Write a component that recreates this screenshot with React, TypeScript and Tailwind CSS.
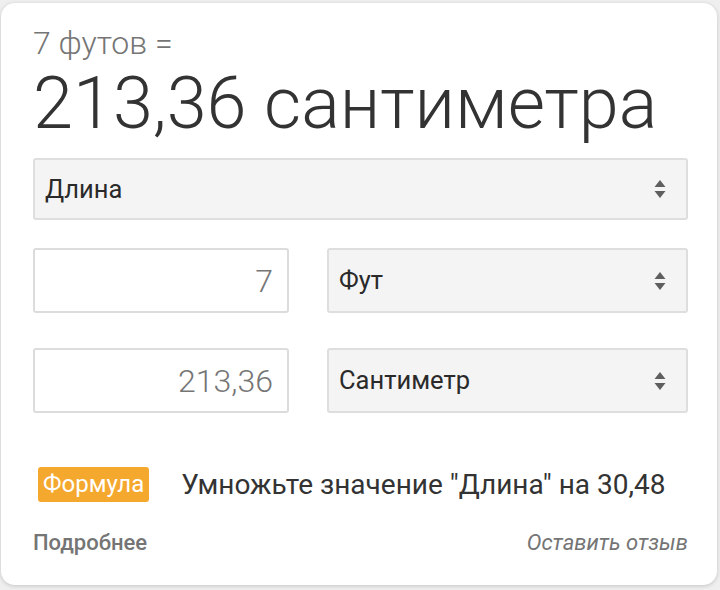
import { useState } from 'react'

function Arrows() {
  return (
    <svg width="14" height="22" viewBox="0 0 14 22" className="shrink-0">
      <path d="M7 2 L12.5 9 H1.5 Z" fill="#5f5f5f" />
      <path d="M7 20 L12.5 13 H1.5 Z" fill="#5f5f5f" />
    </svg>
  )
}

function SelectBox({ label, tall }: { label: string; tall?: boolean }) {
  return (
    <div
      className={`flex items-center justify-between bg-[#f4f4f4] border-2 border-[#dedede] rounded-[3px] pl-[10px] pr-[19px] ${
        tall ? 'h-[62px]' : 'h-[65px]'
      }`}
    >
      <span className="text-[25.5px] font-normal text-[#2a2a2a]">{label}</span>
      <Arrows />
    </div>
  )
}

export default function App() {
  const [value] = useState('7')

  return (
    <div className="w-[720px] h-[590px] bg-[#efefef] font-['Roboto',sans-serif] pt-[3px] pl-[1px]">
      <div className="w-[716px] h-[582px] bg-white rounded-[14px] shadow-[0_1px_4px_rgba(0,0,0,0.18)] pl-[32px] pr-[29px] pt-[20px] flex flex-col">
        <div className="text-[32px] font-light text-[#757575] leading-[40px]">7 футов =</div>
        <div className="text-[72px] font-light text-[#333] leading-[84px] -mt-[1px] whitespace-nowrap">
          213,36 сантиметра
        </div>

        <div className="mt-[12px]">
          <SelectBox label="Длина" tall />
        </div>

        <div className="mt-[28px] flex gap-[38px]">
          <div className="w-[256px] h-[65px] border-2 border-[#dcdcdc] rounded-[3px] flex items-center justify-end pr-[14px]">
            <span className="text-[32px] font-light text-[#757575]">{value}</span>
          </div>
          <div className="flex-1">
            <SelectBox label="Фут" />
          </div>
        </div>

        <div className="mt-[35px] flex gap-[38px]">
          <div className="w-[256px] h-[65px] border-2 border-[#dcdcdc] rounded-[3px] flex items-center justify-end pr-[14px]">
            <span className="text-[32px] font-light text-[#757575]">213,36</span>
          </div>
          <div className="flex-1">
            <SelectBox label="Сантиметр" />
          </div>
        </div>

        <div className="mt-[54px] flex items-center h-[35px]">
          <span className="ml-[5px] bg-[#f5a82e] text-white text-[24px] leading-[35px] px-[5px] rounded-[3px]">
            Формула
          </span>
          <span className="ml-[32px] text-[28px] text-[#333] leading-[35px]">
            Умножьте значение "Длина" на 30,48
          </span>
        </div>

        <div className="mt-[28px] flex justify-between items-center text-[22px] leading-[26px] text-[#757575]">
          <span className="font-medium">Подробнее</span>
          <span className="italic">Оставить отзыв</span>
        </div>
      </div>
    </div>
  )
}
